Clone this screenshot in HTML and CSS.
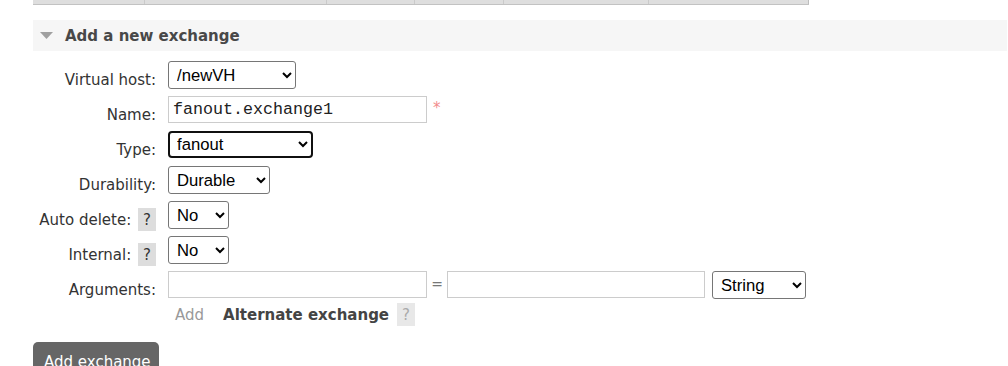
FILE: index.html
```html
<!DOCTYPE html>
<html lang="en">
<head>
	<meta charset="UTF-8">
	<title>Exchanges</title>
	<link rel="stylesheet" href="styles.css">
</head>
<body>
	<div class="topTable">
		<span></span><span></span><span></span><span></span><span></span><span></span>
	</div>
	<section class="section">
		<h2 class="sectionHead">
			<svg class="toggle" width="13" height="7" viewBox="0 0 13 7"><polygon points="0,0 13,0 6.5,7" fill="#a0a0a0"/></svg>
			Add a new exchange
		</h2>
		<form class="exchangeForm">
			<label class="lbl">Virtual host:</label>
			<div class="ctl">
				<select class="sel vhost"><option>/newVH</option></select>
			</div>

			<label class="lbl">Name:</label>
			<div class="ctl">
				<input type="text" class="txt name" value="fanout.exchange1">
				<span class="mandatory">*</span>
			</div>

			<label class="lbl">Type:</label>
			<div class="ctl">
				<select class="sel type focus"><option>fanout</option></select>
			</div>

			<label class="lbl">Durability:</label>
			<div class="ctl">
				<select class="sel durable"><option>Durable</option></select>
			</div>

			<label class="lbl">Auto delete: <span class="help">?</span></label>
			<div class="ctl">
				<select class="sel yesno"><option>No</option></select>
			</div>

			<label class="lbl">Internal: <span class="help">?</span></label>
			<div class="ctl">
				<select class="sel yesno"><option>No</option></select>
			</div>

			<label class="lbl">Arguments:</label>
			<div class="ctl args">
				<div class="argLine">
					<input type="text" class="txt argKey">
					<span class="eq">=</span>
					<input type="text" class="txt argVal">
					<select class="sel argType"><option>String</option></select>
				</div>
				<div class="argExtra">
					<span class="addArg">Add</span>
					<span class="altEx">Alternate exchange</span>
					<span class="help light">?</span>
				</div>
			</div>
		</form>
		<button class="btnAdd">Add exchange</button>
	</section>
</body>
</html>
```

FILE: styles.css
```css
body {
	margin: 0;
	padding: 0 0 0 33px;
	font: 15px "DejaVu Sans", Verdana, sans-serif;
	color: #333;
	background: #fff;
	overflow: hidden;
}

/* table above, scrolled out */
.topTable {
	display: flex;
	width: 776px;
	height: 4px;
	background: #dedede;
	border-bottom: 1px solid #c2c2c2;
}
.topTable span {
	border-right: 1px solid #cacaca;
	height: 4px;
}
.topTable span:nth-child(1) { width: 111px; }
.topTable span:nth-child(2) { width: 181px; }
.topTable span:nth-child(3) { width: 87px; }
.topTable span:nth-child(4) { width: 88px; }
.topTable span:nth-child(5) { width: 144px; }
.topTable span:nth-child(6) { width: 159px; border-right-color: #bdbdbd; }

.section {
	margin-top: 15px;
	width: 974px;
}
.sectionHead {
	display: flex;
	align-items: center;
	height: 31px;
	margin: 0;
	background: #f6f6f6;
	font-size: 15px;
	font-weight: bold;
	line-height: 18px;
	color: #484848;
}
.sectionHead .toggle {
	margin: 0 12px 0 7px;
}

/* form */
.exchangeForm {
	display: grid;
	grid-template-columns: 123px 1fr;
	grid-template-rows: repeat(6, 35px) auto;
	column-gap: 12px;
	margin-top: 10px;
}
.lbl {
	padding-top: 10px;
	text-align: right;
	line-height: 18px;
	color: #333;
	white-space: nowrap;
}
.ctl {
	display: flex;
	align-items: flex-start;
}
.help {
	display: inline-block;
	margin: -3px 0 -2px 2px;
	padding: 3px 5px 2px;
	background: #dddddd;
	color: #333;
	line-height: 18px;
}
.help.light {
	margin: 0;
	background: #e8e8e8;
	color: #aaa;
}

.sel {
	box-sizing: border-box;
	height: 28px;
	padding: 0 0 0 4px;
	font: 16.67px "Liberation Sans", Arial, sans-serif;
	color: #000;
	background: #fff;
	border: 1px solid #767676;
	border-radius: 3px;
}
.sel.vhost { width: 128px; }
.sel.type { width: 145px; height: 27px; }
.sel.durable { width: 102px; }
.sel.yesno { width: 61px; }
.sel.argType { width: 94px; margin-left: 7px; }
.sel.focus {
	border: 2px solid #101010;
	border-radius: 4px;
	padding-left: 3px;
}

.txt {
	box-sizing: border-box;
	height: 27px;
	padding: 0 4px;
	font: 16.67px "Liberation Mono", "Courier New", monospace;
	color: #222;
	border: 1px solid #cccccc;
	border-radius: 0;
	background: #fff;
	outline: none;
}
.txt.name, .txt.argKey { width: 259px; }
.txt.argVal { width: 258px; }
.mandatory {
	margin: 3px 0 0 6px;
	color: #f28b8b;
	font-size: 15px;
	line-height: 18px;
}
.eq {
	width: 20px;
	text-align: center;
	color: #777;
	line-height: 27px;
	font-size: 14px;
}

.args {
	flex-direction: column;
}
.argLine {
	display: flex;
	align-items: flex-start;
}
.argExtra {
	display: flex;
	align-items: center;
	margin-top: 4px;
	padding-left: 7px;
	line-height: 18px;
}
.addArg {
	color: #999;
	margin-right: 19px;
}
.altEx {
	font-weight: bold;
	color: #444;
	margin-right: 8px;
}

.btnAdd {
	display: block;
	margin-top: 16px;
	padding: 11px 8px 9px 11px;
	font: 15px "DejaVu Sans", Verdana, sans-serif;
	line-height: 18px;
	color: #fff;
	background: #666;
	border: none;
	border-radius: 5px;
}
```
